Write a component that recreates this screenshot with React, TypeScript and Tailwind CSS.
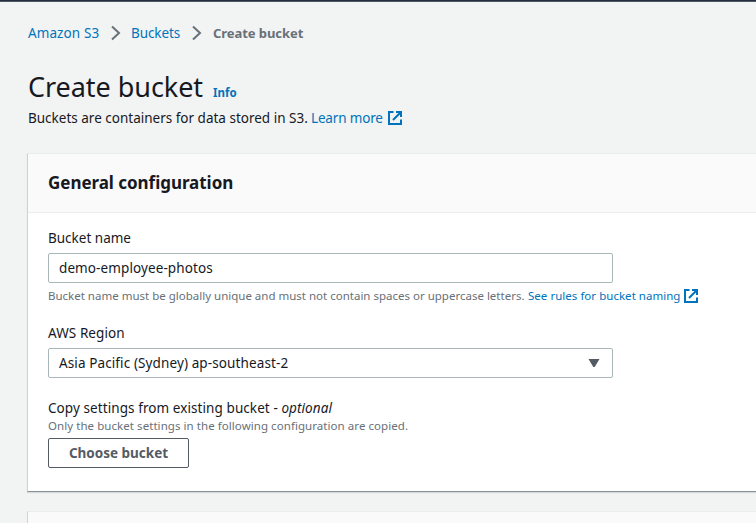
function ExternalIcon({ className = "" }: { className?: string }) {
  return (
    <svg className={`h-[14px] w-[14px] shrink-0 ${className}`} viewBox="0 0 14 14" fill="none" stroke="#0073bb" strokeWidth="2">
      <path d="M5.500 1H1v12h12V8.500" />
      <path d="M8 1h5v5M13 1 5 9" />
    </svg>
  );
}

function Chevron() {
  return (
    <svg className="h-4 w-[10px] shrink-0" viewBox="0 0 10 16" fill="none" stroke="#687078" strokeWidth="2">
      <path d="M1 1.500 8 8 1 14.500" />
    </svg>
  );
}

export default function App() {
  return (
    <div className="flex h-[523px] w-[756px] flex-col overflow-hidden whitespace-nowrap bg-[#f2f3f3] font-['Noto_Sans','Open_Sans',sans-serif] text-[13.5px] leading-[22px] text-[#16191f]">
      <div className="h-[2px] shrink-0 border-b border-[#4b5563] bg-[#232f3e]" />

      <nav className="mt-5 flex h-[22px] shrink-0 items-center pl-7">
        <a className="w-[83px] tracking-[0.1px] text-[#0073bb]">Amazon S3</a>
        <Chevron />
        <a className="ml-[10px] w-[61px] tracking-[-0.08px] text-[#0073bb]">Buckets</a>
        <Chevron />
        <span className="ml-[11px] text-[13px] font-bold tracking-[-0.06px] text-[#687078]">Create bucket</span>
      </nav>

      <header className="mt-[25px] shrink-0 pl-7">
        <div className="flex h-9 items-baseline">
          <h1 className="w-[185px] text-[27px] leading-9 tracking-[-0.05px]">Create bucket</h1>
          <a className="text-[11.5px] font-bold text-[#0073bb]">Info</a>
        </div>
        <p className="mt-[2px] flex h-[22px] items-center">
          <span className="w-[283px]">Buckets are containers for data stored in S3.</span>
          <a className="w-[77px] tracking-[-0.16px] text-[#0073bb]">Learn more</a>
          <ExternalIcon />
        </p>
      </header>

      <section className="ml-[27px] mt-6 h-[339px] shrink-0 border-b border-l border-t border-b-[#879196] border-l-[#d0d3d3] border-t-[#eaeded] bg-white shadow-[0_1px_1px_0_#d5dbdb]">
        <div className="flex h-[59px] items-center border-b border-[#eaeded] bg-[#fafafa] pb-px pl-5">
          <h2 className="text-[17px] font-bold tracking-[-0.04px]">General configuration</h2>
        </div>
        <div className="pl-5 pt-[14px]">
          <label className="block h-[26px]">Bucket name</label>
          <div className="flex h-[30px] w-[565px] items-center rounded-[2px] border border-[#aab7b8] pl-[10px] tracking-[0.1px]">demo-employee-photos</div>
          <div className="mt-[2px] flex h-[22px] items-center text-[11.5px] text-[#687078]">
            <span className="w-[480px]">Bucket name must be globally unique and must not contain spaces or uppercase letters.</span>
            <a className="w-[156px] tracking-[0.03px] text-[#0073bb]">See rules for bucket naming</a>
            <ExternalIcon />
          </div>
          <label className="mt-[15px] block h-[26px] tracking-[0.08px]">AWS Region</label>
          <div className="flex h-[30px] w-[565px] items-center justify-between rounded-[2px] border border-[#aab7b8] pl-[10px] pr-3">
            <span className="tracking-[0.11px]">Asia Pacific (Sydney) ap-southeast-2</span>
            <svg className="h-2 w-3" viewBox="0 0 12 8" fill="#545b64"><path d="M.5 0h11L6.700 8H5.300z" /></svg>
          </div>
          <div className="mt-[19px] h-[21px] tracking-[0.08px]">Copy settings from existing bucket - <i>optional</i></div>
          <p className="h-5 text-[11.5px] leading-4 tracking-[0.06px] text-[#687078]">Only the bucket settings in the following configuration are copied.</p>
          <button className="flex h-[30px] w-[141px] items-center justify-center rounded-[2px] border border-[#545b64] font-bold text-[#545b64]">Choose bucket</button>
        </div>
      </section>

      <section className="ml-[27px] mt-[19px] h-4 shrink-0 border-l border-t border-l-[#d0d3d3] border-t-[#eaeded] bg-[#fafafa]" />
    </div>
  );
}
